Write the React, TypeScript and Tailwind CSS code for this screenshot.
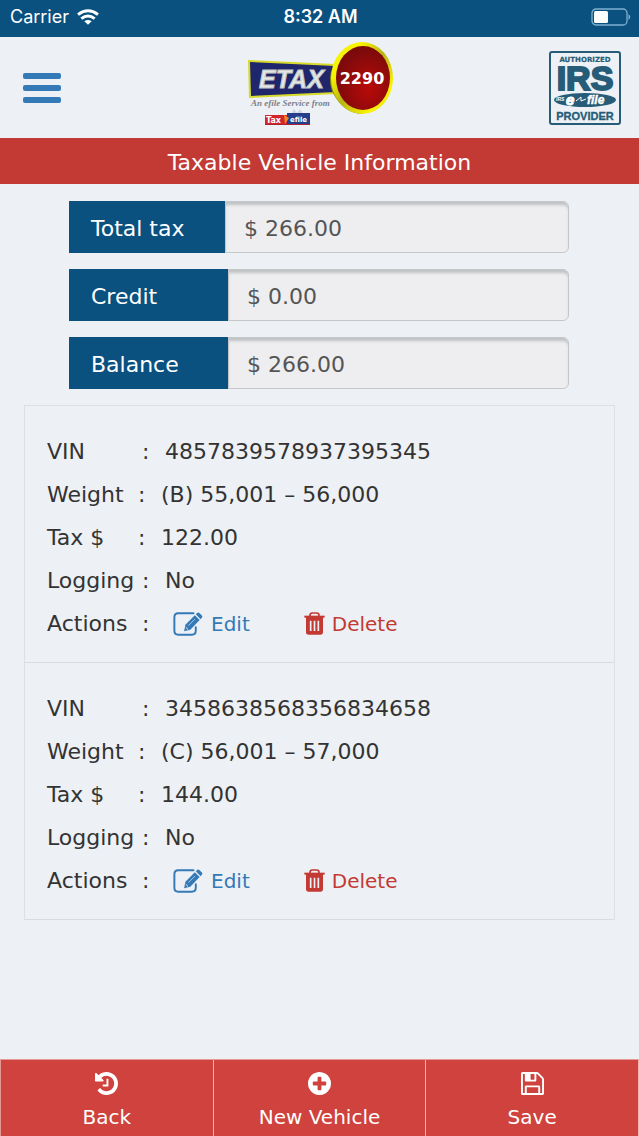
type Vehicle = { vin: string; weight: string; tax: string; logging: string }

const totals = [
  { id: "total", label: "Total tax", value: "$ 266.00", width: "w-[156px]" },
  { id: "credit", label: "Credit", value: "$ 0.00", width: "w-[159px]" },
  { id: "balance", label: "Balance", value: "$ 266.00", width: "w-[159px]" },
]

const vehicles: Vehicle[] = [
  { vin: "4857839578937395345", weight: "(B) 55,001 – 56,000", tax: "122.00", logging: "No" },
  { vin: "3458638568356834658", weight: "(C) 56,001 – 57,000", tax: "144.00", logging: "No" },
]

function WifiIcon() {
  return (
    <svg viewBox="0 0 66 46" className="w-[22px] h-4" fill="none" stroke="white" strokeWidth="9" aria-hidden="true">
      <path d="M3 16 Q33 -7 63 16" />
      <path d="M13 28 Q33 12 53 28" />
      <path d="M33 46 L22 36 Q33 28 44 36 Z" fill="white" stroke="none" />
    </svg>
  )
}

function BatteryIcon() {
  return (
    <svg viewBox="0 0 40 18" className="w-10 h-[18px]" aria-hidden="true">
      <rect x="1" y="1" width="35" height="16" rx="4" fill="none" stroke="#7fb0d0" strokeWidth="1.3" />
      <rect x="3" y="3" width="14" height="12" rx="1.5" fill="white" />
      <path d="M37.500 6 Q41 9 37.500 12Z" fill="#7fb0d0" />
    </svg>
  )
}

function EtaxLogo() {
  return (
    <svg viewBox="3 1 160 100" className="w-40 h-[100px]" role="img" aria-label="ETAX 2290">
      <defs>
        <linearGradient id="rim" x1="0" y1="0" x2="1" y2="1">
          <stop offset="0" stopColor="#f4ee12" />
          <stop offset="0.25" stopColor="#f8f400" />
          <stop offset="0.5" stopColor="#b8b414" />
          <stop offset="0.8" stopColor="#fbf600" />
          <stop offset="1" stopColor="#c9c42a" />
        </linearGradient>
        <radialGradient id="disc" cx="0.6" cy="0.65" r="0.6">
          <stop offset="0" stopColor="#b90a0a" />
          <stop offset="1" stopColor="#7d0a0b" />
        </radialGradient>
      </defs>
      <path d="M8 23 L95 27 L97 57 L9 61Z" fill="#d6da2b" />
      <path d="M10 25 L95 29 L96 55 L11 59Z" fill="#20266b" />
      <path d="M91 34 Q88 48 94 58 Q104 76 122 77 L110 50Z" fill="#8d8f14" />
      <ellipse cx="122" cy="41" rx="31" ry="36" fill="url(#rim)" />
      <ellipse cx="123" cy="41" rx="27" ry="32" fill="url(#disc)" />
      <text
        x="19"
        y="51"
        fontSize="25"
        fontFamily="'Liberation Sans', Arial, sans-serif"
        fontWeight="700"
        fontStyle="italic"
        fill="#e4e7e6"
        stroke="#c3c9c8"
        strokeWidth="1"
      >
        ETAX
      </text>
      <text x="122" y="47" fontSize="16" fontFamily="'DejaVu Sans', sans-serif" fontWeight="700" fill="white" textAnchor="middle">2290</text>
      <text x="11" y="69" fontSize="9" fontFamily="'Liberation Serif', serif" fontStyle="italic" fontWeight="700" fill="#7c808b">An efile Service from</text>
      <path d="M51 77 L54 72 L57 76 L60 72 L63 77Z" fill="#cfd5e2" />
      <rect x="25" y="78" width="22" height="10" fill="#d3252d" />
      <rect x="47" y="76" width="23" height="12" fill="#263f8c" />
      <path d="M25 87h45v1h-45z" fill="#aa2530" />
      <path d="M44 78 L49 81 L45 87Z" fill="#f08a24" />
      <g fontFamily="'DejaVu Sans', sans-serif" fontWeight="700" fill="white">
        <text x="26" y="86" fontSize="8">Tax</text>
        <text x="50" y="85" fontSize="7">efile</text>
      </g>
    </svg>
  )
}

function IrsBadge() {
  return (
    <svg viewBox="0 0 74 76" className="w-[74px] h-[76px]" role="img" aria-label="Authorized IRS e-file provider">
      <rect x="2" y="2" width="70" height="72" rx="2" fill="none" stroke="#265c78" strokeWidth="2" />
      <g fontFamily="'Liberation Sans', Arial, sans-serif" fontWeight="700" fill="#265c78" textAnchor="middle">
        <text x="37" y="12" fontSize="7" fontFamily="'DejaVu Sans', sans-serif" stroke="#265c78" strokeWidth="0.2">AUTHORIZED</text>
        <text x="37" y="40" fontSize="34" stroke="#265c78" strokeWidth="2">IRS</text>
        <text x="37" y="70" fontSize="11" stroke="#265c78" strokeWidth="0.3">PROVIDER</text>
      </g>
      <ellipse cx="37" cy="50" rx="31" ry="7" fill="#265c78" />
      <g fontFamily="'Liberation Sans', Arial, sans-serif" fontWeight="700" fontStyle="italic" fill="white">
        <text x="8" y="51" fontSize="5">IRS</text>
        <text x="18" y="55" fontSize="15" stroke="white">e</text>
        <text x="39" y="54" fontSize="12" stroke="white" strokeWidth="0.4">file</text>
      </g>
      <path d="M28 51 L33 47 L33 51 L38 49" fill="none" stroke="white" strokeWidth="1" />
    </svg>
  )
}

function EditIcon() {
  return (
    <svg viewBox="-1 -1 92 74" className="w-[30px] h-6" fill="none" aria-hidden="true">
      <path
        d="M62 3 H15 Q3 3 3 15 V57 Q3 69 15 69 H57 Q69 69 69 57 V46"
        stroke="currentColor"
        strokeWidth="6"
        strokeLinecap="round"
      />
      <path d="M33 58 L37 38 L66 9 L81 24 L52 54Z" fill="currentColor" />
      <path d="M69 6 L74 1 Q77 -1 80 2 L88 10 Q91 13 88 16 L84 21Z" fill="currentColor" />
      <path d="M46 41 L66 21" stroke="#edf0f5" strokeWidth="2" />
      <path d="M38 46 L45 53" stroke="#edf0f5" strokeWidth="3" />
    </svg>
  )
}

function TrashIcon() {
  return (
    <svg viewBox="0 0 63 69" className="w-[21px] h-[23px]" fill="none" stroke="currentColor" aria-hidden="true">
      <path d="M18 13 V10 Q18 3 25 3 H38 Q45 3 45 10 V13" strokeWidth="5" />
      <path d="M1 14 H62" strokeWidth="6" />
      <path d="M6 15 H57 V60 Q57 68 49 68 H14 Q6 68 6 60Z" fill="currentColor" stroke="none" />
      <path d="M20 26 V57 M31.500 26 V57 M43 26 V57" stroke="#edf0f5" strokeWidth="5" />
    </svg>
  )
}

const footerActions = [
  {
    label: "Back",
    icon: "M1664 896q0 156-61 298t-164 245-245 164-298 61q-172 0-327-72.5t-264-204.5q-7-10-6.5-22.5t8.5-20.5l137-138q10-9 25-9 16 2 23 12 73 95 179 147t225 52q104 0 198.5-40.5t163.5-109.5 109.5-163.5 40.5-198.5-40.5-198.5-109.5-163.5-163.5-109.5-198.5-40.5q-98 0-188 35.5t-160 101.5l137 138q31 30 14 69-17 40-59 40h-448q-26 0-45-19t-19-45v-448q0-42 40-59 39-17 69 14l130 129q107-101 244.5-156.5t284.5-55.5q156 0 298 61t245 164 164 245 61 298zm-640-288v448q0 14-9 23t-23 9h-320q-14 0-23-9t-9-23v-64q0-14 9-23t23-9h224v-352q0-14 9-23t23-9h64q14 0 23 9t9 23z",
  },
  {
    label: "New Vehicle",
    icon: "M1344 960v-128q0-26-19-45t-45-19h-256v-256q0-26-19-45t-45-19h-128q-26 0-45 19t-19 45v256h-256q-26 0-45 19t-19 45v128q0 26 19 45t45 19h256v256q0 26 19 45t45 19h128q26 0 45-19t19-45v-256h256q26 0 45-19t19-45zm320-64q0 209-103 385.500t-279.500 279.500-385.500 103-385.500-103-279.500-279.500-103-385.500 103-385.500 279.500-279.500 385.500-103 385.500 103 279.500 279.500 103 385.500z",
  },
  {
    label: "Save",
    icon: "M512 1536h768v-384h-768v384zm896 0h128v-896q0-14-10-38.500t-20-34.500l-281-281q-10-10-34-20t-39-10v416q0 40-28 68t-68 28h-576q-40 0-68-28t-28-68v-416h-128v1280h128v-416q0-40 28-68t68-28h832q40 0 68 28t28 68v416zm-384-928v-320q0-13-9.500-22.500t-22.500-9.500h-192q-13 0-22.500 9.500t-9.500 22.500v320q0 13 9.500 22.500t22.500 9.500h192q13 0 22.500-9.500t9.500-22.500zm640 32v928q0 40-28 68t-68 28h-1344q-40 0-68-28t-28-68v-1344q0-40 28-68t68-28h928q40 0 88 20t76 48l280 280q28 28 48 76t20 88z",
  },
]

function VehicleCard({ vehicle }: { vehicle: Vehicle }) {
  const rows = [
    { label: "VIN", value: vehicle.vin, width: "w-[95px]" },
    { label: "Weight", value: vehicle.weight, width: "w-[91px]" },
    { label: "Tax $", value: vehicle.tax, width: "w-[91px]" },
    { label: "Logging", value: vehicle.logging, width: "w-[95px]" },
  ]

  return (
    <li className="px-[22px] pt-6 pb-[17px] border-b border-[#d8dbdf]">
      <dl>
        {rows.map((row) => (
          <div key={row.label} className="flex leading-[43px]">
            <dt className={`${row.width} shrink-0`}>{row.label}</dt>
            <dd className="flex">
              <span className="w-[23px]">:</span>
              {row.value}
            </dd>
          </div>
        ))}
        <div className="flex leading-[43px]">
          <dt className="w-[95px] shrink-0">Actions</dt>
          <dd className="flex">
            <span className="w-[31px]">:</span>
            <span className="flex gap-[54px] text-xl">
              <button className="flex items-center gap-2 text-[#337ab7] cursor-pointer">
                <EditIcon />
                Edit
              </button>
              <button className="flex items-center gap-[7px] text-[#c23a33] cursor-pointer">
                <TrashIcon />
                Delete
              </button>
            </span>
          </dd>
        </div>
      </dl>
    </li>
  )
}

export default function App() {
  return (
    <div className="min-h-screen flex flex-col bg-[#edf0f4] text-[#333] text-[22px] font-['DejaVu_Sans',sans-serif]">
      {/* Status bar */}
      <div className="grid grid-cols-3 items-center h-[37px] pl-[10px] pr-2 pb-1 bg-[#0a517f] text-white font-['Inter',sans-serif]">
        <div className="flex items-center gap-2 text-lg">
          Carrier
          <WifiIcon />
        </div>
        <div className="text-center text-lg font-semibold">8:32 AM</div>
        <div className="flex justify-end">
          <BatteryIcon />
        </div>
      </div>

      {/* Header */}
      <header className="grid grid-cols-[1fr_auto_1fr] items-center h-[101px] pl-[23px] pr-[17px]">
        <button aria-label="Menu" className="flex flex-col gap-[6px] w-[38px] cursor-pointer">
          <span className="h-[6px] rounded-xs bg-[#337ab7]" />
          <span className="h-[6px] rounded-xs bg-[#337ab7]" />
          <span className="h-[6px] rounded-xs bg-[#337ab7]" />
        </button>
        <EtaxLogo />
        <div className="flex justify-end">
          <IrsBadge />
        </div>
      </header>

      <h1 className="h-[46px] pt-[2px] flex items-center justify-center bg-[#c23a33] text-white">
        Taxable Vehicle Information
      </h1>

      <main className="flex-1">
        {/* Totals */}
        <div className="flex flex-col gap-4 pl-[69px] pr-[70px] pt-[17px]">
          {totals.map((total) => (
            <div key={total.id} className="flex h-[52px]">
              <label
                htmlFor={total.id}
                className={`${total.width} shrink-0 flex items-center pl-[22px] pt-[2px] bg-[#0a517f] text-white`}
              >
                {total.label}
              </label>
              <input
                id={total.id}
                readOnly
                value={total.value}
                className="flex-1 min-w-0 pl-[18px] pt-[2px] rounded-r-md border border-[#c4c7c9] bg-[#eeeef0] text-[#555] shadow-[inset_0_4px_3px_-1px_#c0c2c4] outline-none"
              />
            </div>
          ))}
        </div>

        {/* Vehicles */}
        <ul className="mx-6 mt-4 mb-6 border border-b-0 border-[#dcdfe3]">
          {vehicles.map((vehicle) => (
            <VehicleCard key={vehicle.vin} vehicle={vehicle} />
          ))}
        </ul>
      </main>

      {/* Bottom actions */}
      <footer className="grid grid-cols-3 h-[77px] border-l border-t border-[#e49a94] bg-[#cf423d] text-white text-xl">
        {footerActions.map((action) => (
          <button
            key={action.label}
            className="flex flex-col items-center gap-2 pt-3 leading-7 border-r border-[#eeb5b0] cursor-pointer"
          >
            <svg viewBox="128 128 1536 1536" className="size-[23px]" fill="currentColor" aria-hidden="true">
              <path d={action.icon} />
            </svg>
            {action.label}
          </button>
        ))}
      </footer>
    </div>
  )
}
